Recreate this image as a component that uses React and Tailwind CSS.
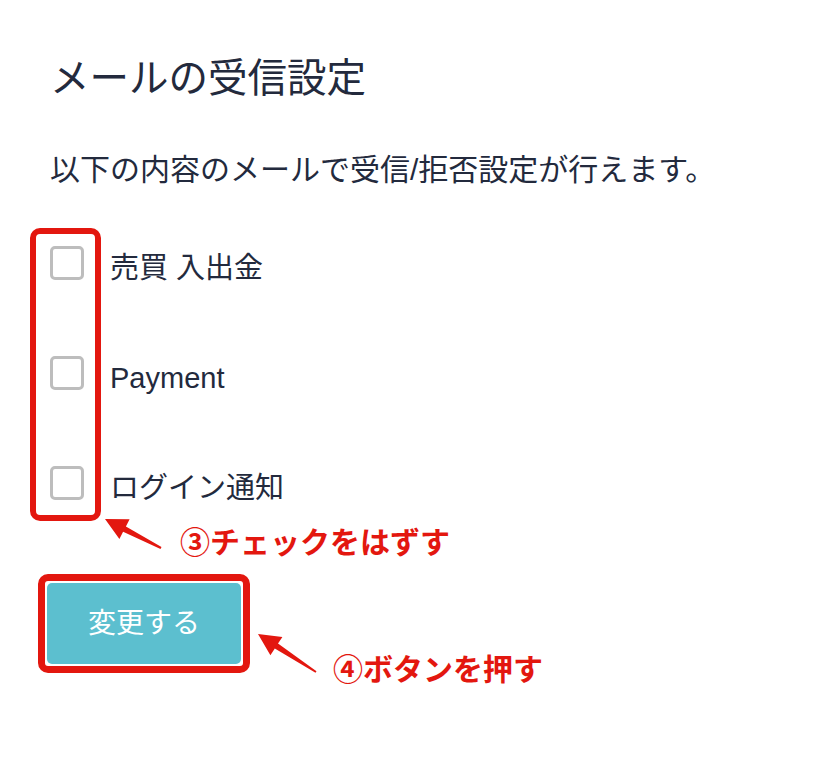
export default function App() {
  const font = { fontFamily: '"Liberation Sans", "Noto Sans CJK JP", sans-serif' };
  const items = ["売買 入出金", "Payment", "ログイン通知"];
  return (
    <div className="relative w-[834px] h-[760px] bg-white overflow-hidden text-[#232a3d]" style={font}>
      <div className="flex flex-col pl-[50px] pt-[54px]">
        <h1 className="text-[39.5px] leading-[48px] font-normal">メールの受信設定</h1>
        <p className="mt-[48px] text-[30px] leading-[40px]">以下の内容のメールで受信/拒否設定が行えます。</p>
        <div className="relative mt-[58px] flex flex-col gap-[70px]">
          {items.map((t) => (
            <div key={t} className="flex items-center h-[40px] gap-[26px]">
              <span className="w-[34px] h-[34px] shrink-0 rounded-[5px] border-[3px] border-[#bdbdbd] bg-white -mt-[10px]"></span>
              <span className="text-[29px] leading-[40px]">{t}</span>
            </div>
          ))}
          <div className="absolute left-[-20px] top-[-20px] w-[71px] h-[293px] rounded-[10px] border-[6px] border-[#e3170f]"></div>
        </div>
        <div className="mt-[66px] ml-[-12px] self-start rounded-[10px] border-[7px] border-[#e3170f] p-[2px]">
          <button className="w-[194px] h-[81px] rounded-[5px] bg-[#5cbfcf] text-white text-[28px] leading-[40px] flex items-center justify-center">変更する</button>
        </div>
      </div>

      <span className="absolute left-[180px] top-[520px] text-[30px] leading-[40px] font-bold text-[#e3170f]" style={{ fontFamily: '"Noto Sans CJK JP", sans-serif' }}>③チェックをはずす</span>
      <span className="absolute left-[333px] top-[647px] text-[30px] leading-[40px] font-bold text-[#e3170f]" style={{ fontFamily: '"Noto Sans CJK JP", sans-serif' }}>④ボタンを押す</span>

      <svg className="absolute left-0 top-0 pointer-events-none" width="834" height="760">
        <polygon fill="#e3170f" points="105,519 129.6,519.3 125.9,526.4 161.5,547.1 160.5,548.9 123.1,531.8 119.4,538.9" />
        <polygon fill="#e3170f" points="258,634 282.4,636.9 278,643.6 316.5,671.2 315.5,672.8 274.8,648.6 270.4,655.3" />
      </svg>
    </div>
  );
}
